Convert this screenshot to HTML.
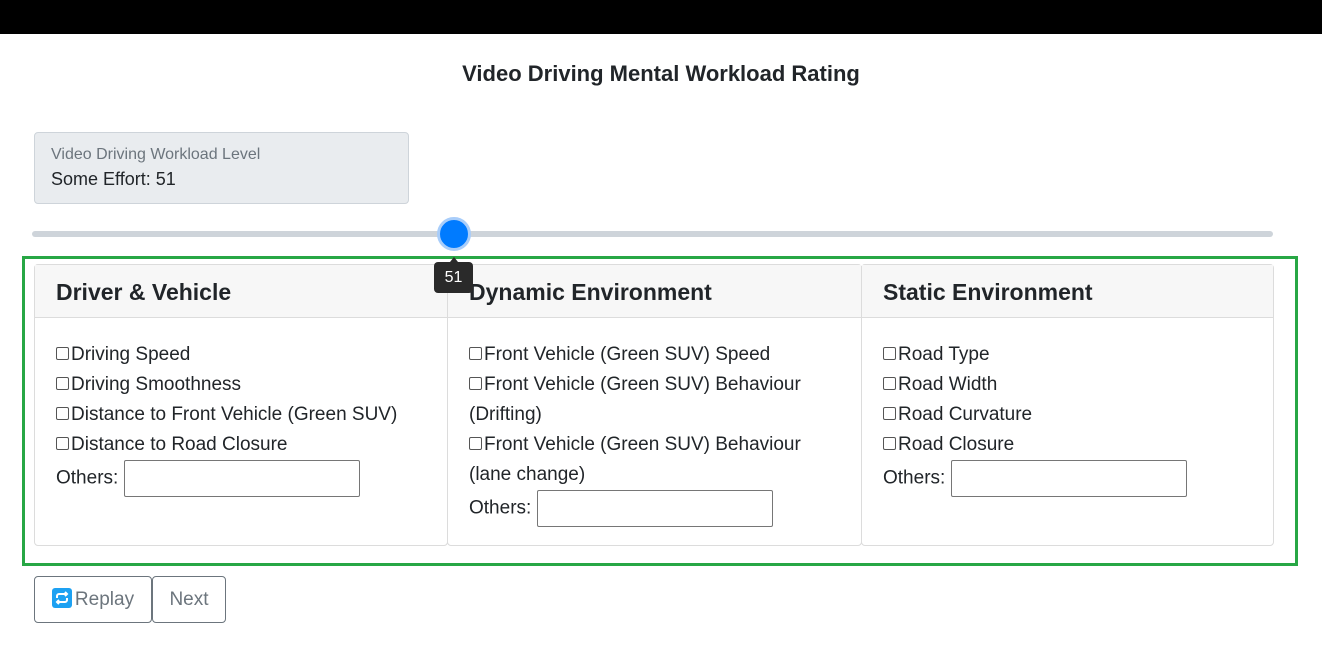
<!DOCTYPE html>
<html><head><meta charset="utf-8"><style>
*{box-sizing:border-box;margin:0;padding:0}
body{width:1322px;height:646px;background:#fff;font-family:"Liberation Sans",sans-serif;color:#212529;position:relative;overflow:hidden}
.top{position:absolute;left:0;top:0;width:1322px;height:34px;background:#000}
h1{position:absolute;top:61px;left:0;width:1322px;text-align:center;font-size:22px;font-weight:bold}
.lvl{position:absolute;left:34px;top:132px;width:375px;height:72px;background:#e9ecef;border:1px solid #ced4da;border-radius:4px;padding:13px 16px}
.lvl .a{font-size:16px;color:#6c757d}
.lvl .b{font-size:18px;margin-top:5px}
.track{position:absolute;left:32px;top:231px;width:1241px;height:6px;background:#ced4da;border-radius:3px}
.thumb{position:absolute;left:437px;top:217px;width:34px;height:34px;border-radius:50%;background:#007bff;border:3px solid #a8cdfa}
.tip{position:absolute;left:434px;top:262px;width:39px;height:31px;background:#2a2a2a;color:#fff;border-radius:4px;font-size:16px;text-align:center;line-height:31px;z-index:3}
.tip:before{content:"";position:absolute;left:16px;top:-5px;border:4px solid transparent;border-top:0;border-bottom:5px solid #2a2a2a}
.green{position:absolute;left:22px;top:256px;width:1276px;height:310px;border:3px solid #28a745}
.card{position:absolute;top:264px;height:282px;border:1px solid #dcdcdc;border-radius:4px;background:#fff}
.card .h{height:53px;background:#f7f7f7;border-bottom:1px solid #dcdcdc;font-size:23px;font-weight:bold;padding:14px 0 0 21px}
.card .bd{padding:22px 0 0 21px;font-size:19px;line-height:30px}
.cb{display:inline-block;width:13px;height:13px;border:1px solid #555;border-radius:2px;margin-right:2px;vertical-align:0}
input{width:236px;height:37px;border:1px solid #767676;border-radius:2px;vertical-align:middle}
.btn{position:absolute;top:576px;height:47px;border:1px solid #6c757d;border-radius:4px;font-size:19px;color:#6c757d;line-height:45px;text-align:center}
</style></head><body>
<div class="top"></div>
<h1>Video Driving Mental Workload Rating</h1>
<div class="lvl"><div class="a">Video Driving Workload Level</div><div class="b">Some Effort: 51</div></div>
<div class="track"></div>
<div class="thumb"></div>
<div class="green"></div>
<div class="card" style="left:34px;width:414px"><div class="h">Driver &amp; Vehicle</div><div class="bd">
<div><span class="cb"></span>Driving Speed</div>
<div><span class="cb"></span>Driving Smoothness</div>
<div><span class="cb"></span>Distance to Front Vehicle (Green SUV)</div>
<div><span class="cb"></span>Distance to Road Closure</div>
<div>Others: <input></div></div></div>
<div class="card" style="left:447px;width:415px"><div class="h">Dynamic Environment</div><div class="bd">
<div><span class="cb"></span>Front Vehicle (Green SUV) Speed</div>
<div><span class="cb"></span>Front Vehicle (Green SUV) Behaviour<br>(Drifting)</div>
<div><span class="cb"></span>Front Vehicle (Green SUV) Behaviour<br>(lane change)</div>
<div>Others: <input></div></div></div>
<div class="card" style="left:861px;width:413px"><div class="h">Static Environment</div><div class="bd">
<div><span class="cb"></span>Road Type</div>
<div><span class="cb"></span>Road Width</div>
<div><span class="cb"></span>Road Curvature</div>
<div><span class="cb"></span>Road Closure</div>
<div>Others: <input></div></div></div>
<div class="tip">51</div>
<div class="btn" style="left:34px;width:118px"><svg width="20" height="20" viewBox="0 0 20 20" style="vertical-align:-3px;margin-right:3px"><rect width="20" height="20" rx="3" fill="#1da1f2"/><path d="M5 10V8a2 2 0 0 1 2-2h8M13 4l2 2-2 2M15 10v2a2 2 0 0 1-2 2H5M7 16l-2-2 2-2" stroke="#fff" stroke-width="2" fill="none"/></svg>Replay</div>
<div class="btn" style="left:152px;width:74px">Next</div>
</body></html>
